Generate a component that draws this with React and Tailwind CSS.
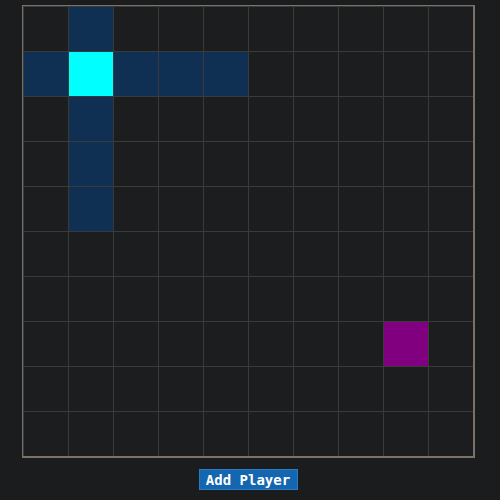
import React from 'react';

const SIZE = 10;

// cell colors keyed by "row-col"
const painted = {
    '0-1': 'bg-[#0f3052]',
    '1-0': 'bg-[#0f3052]',
    '1-1': 'bg-[#00ffff]',
    '1-2': 'bg-[#0f3052]',
    '1-3': 'bg-[#0f3052]',
    '1-4': 'bg-[#0f3052]',
    '2-1': 'bg-[#0f3052]',
    '3-1': 'bg-[#0f3052]',
    '4-1': 'bg-[#0f3052]',
    '7-8': 'bg-[#800080]'
};

const App = () => {
    const cells = [];
    for (let r = 0; r < SIZE; r++) {
        for (let c = 0; c < SIZE; c++) {
            const bg = painted[`${r}-${c}`] || 'bg-[#1c1d1f]';
            cells.push(
                <div key={`${r}-${c}`} className={`w-[45px] h-[45px] border-l border-t border-[#3a3a3a] ${bg}`} />
            );
        }
    }

    return (
        <div className="w-[500px] h-[500px] bg-[#1b1c1e] overflow-hidden">
            <div className="w-[496px] flex flex-col items-center pt-[5px]">
                {/* Board */}
                <div className="border-2 border-[#7a7266]">
                    <div className="grid grid-cols-10 w-[450px] -ml-px -mt-px">
                        {cells}
                    </div>
                </div>

                {/* Actions */}
                <button
                    className="mt-[11px] w-[99px] h-[21px] bg-[#1466b0] border border-[#2a7cc4] text-white text-[14px] font-bold leading-none"
                    style={{ fontFamily: '"DejaVu Sans Mono", monospace' }}
                >
                    Add Player
                </button>
            </div>
        </div>
    );
};

export default App;
